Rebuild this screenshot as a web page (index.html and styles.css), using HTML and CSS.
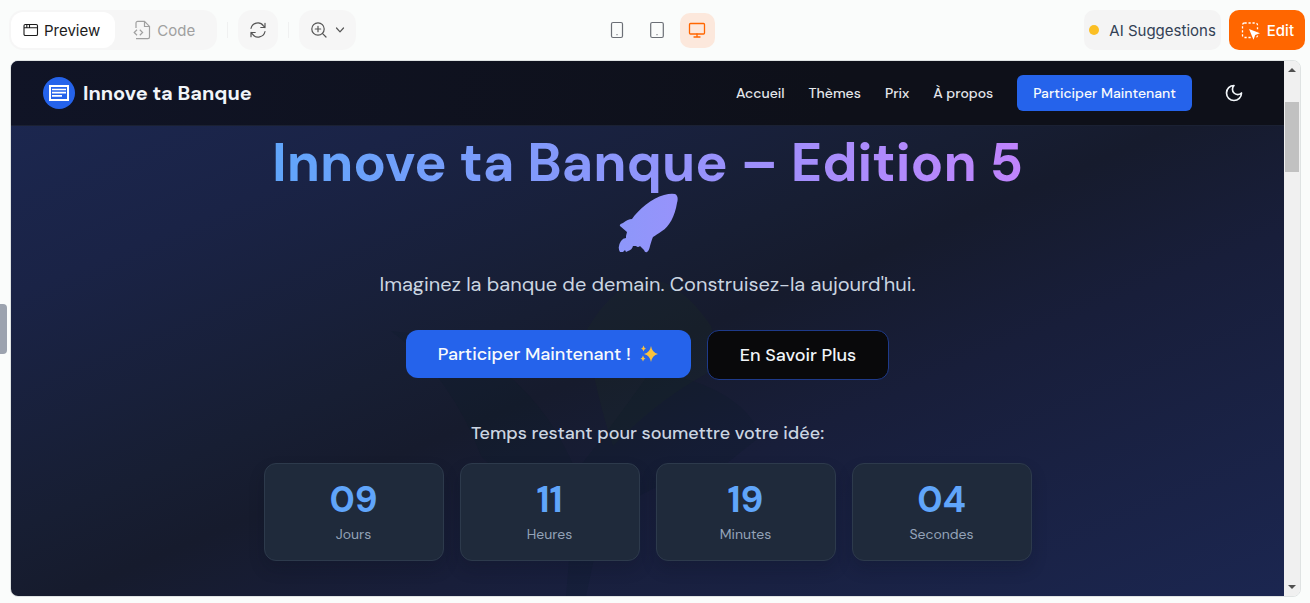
FILE: index.html
```html
<!DOCTYPE html>
<html lang="fr">
<head>
<meta charset="utf-8">
<meta name="viewport" content="width=device-width, initial-scale=1">
<title>Innove ta Banque</title>
<link rel="stylesheet" href="styles.css">
</head>
<body>
<div class="toolbar">
  <div class="tools">
    <div class="tabs">
      <button class="tab tab-active" type="button">
        <svg width="16" height="16" viewBox="0 0 16 16" fill="none" stroke="currentColor" stroke-width="1.1"><rect x="1" y="2.5" width="13.5" height="11" rx="1.3"/><path d="M1 5.8h13.5M3.8 2.5v3.3M6.5 2.5v3.3"/></svg>
        Preview
      </button>
      <button class="tab" type="button">
        <svg width="18" height="20" viewBox="0 0 18 20" fill="none" stroke="currentColor" stroke-width="1.2"><path d="M3 8V3a1.6 1.6 0 0 1 1.600-1.600H11.500L16.500 6.400V17a1.600 1.600 0 0 1-1.600 1.600H3M11.500 1.500v5h5M4 9.800 1.200 12.500 4 15.200M6.800 9.800 9.600 12.500 6.800 15.200"/></svg>
        Code
      </button>
    </div>
    <span class="divider"></span>
    <button class="tool" type="button" aria-label="Refresh">
      <svg width="18" height="18" viewBox="0 0 18 18" fill="none" stroke="currentColor" stroke-width="1.2" stroke-linecap="round" stroke-linejoin="round"><path d="M2 7.500A7 7 0 0 1 14.500 4.800L16 6.500M16 2.300V6.500H11.800M16 10.500A7 7 0 0 1 3.500 13.200L2 11.500M2 15.700V11.500H6.200"/></svg>
    </button>
    <span class="divider"></span>
    <button class="tool tool-zoom" type="button" aria-label="Zoom">
      <svg width="18" height="18" viewBox="0 0 18 18" fill="none" stroke="currentColor" stroke-width="1.2" stroke-linecap="round"><circle cx="8" cy="8" r="6.200"/><path d="M12.600 12.600 16 16M5.300 8h5.400M8 5.300v5.400"/></svg>
      <svg width="12" height="12" viewBox="0 0 12 12" fill="none" stroke="currentColor" stroke-width="1.2" stroke-linecap="round" stroke-linejoin="round"><path d="M2.500 4 6 7.800 9.500 4"/></svg>
    </button>
  </div>
  <div class="devices">
    <button class="device" type="button" aria-label="Mobile">
      <svg width="18" height="18" viewBox="0 0 18 18" fill="none" stroke="currentColor" stroke-width="1.2"><rect x="3.500" y="1.500" width="11" height="15" rx="1.500"/><path d="M8.500 13.700h1"/></svg>
    </button>
    <button class="device" type="button" aria-label="Tablet">
      <svg width="18" height="18" viewBox="0 0 18 18" fill="none" stroke="currentColor" stroke-width="1.2"><rect x="2.700" y="1.500" width="12.600" height="15" rx="1.500"/><path d="M8.500 13.700h1"/></svg>
    </button>
    <button class="device device-active" type="button" aria-label="Desktop">
      <svg width="18" height="18" viewBox="0 0 18 18" fill="none" stroke="currentColor" stroke-width="1.300" stroke-linecap="round"><rect x="1.500" y="2.500" width="15" height="10.500" rx="1"/><path d="M9 13v3M6 16h6"/></svg>
    </button>
  </div>
  <div class="actions">
    <button class="suggest" type="button"><span class="dot"></span>AI Suggestions</button>
    <button class="edit" type="button">
      <svg width="20" height="20" viewBox="0 0 20 20" fill="none"><rect x="2.500" y="3" width="15" height="14.500" rx="2" stroke="#fff" stroke-width="1.300" stroke-dasharray="2.200 1.800"/><path d="M9 9 20 13.200 15.200 15 13.500 19.800Z" fill="#fff" stroke="#ff6600" stroke-width="2.400" paint-order="stroke" stroke-linejoin="round"/></svg>
      Edit
    </button>
  </div>
</div>

<div class="workspace">
  <span class="handle"></span>
  <div class="frame">
    <div class="site">
      <header class="header">
        <div class="brand">
          <svg width="32" height="32" viewBox="0 0 32 32" fill="none" stroke="#fff"><circle cx="16" cy="16" r="16" fill="#2563eb" stroke="none"/><rect x="7" y="9" width="18" height="14" stroke-width="2"/><path d="M9 12.500h14M9 15.700h14M9 18.900h10" stroke-width="1.700"/></svg>
          Innove ta Banque
        </div>
        <nav class="nav">
          <a href="#accueil">Accueil</a>
          <a href="#themes">Thèmes</a>
          <a href="#prix">Prix</a>
          <a href="#apropos">À propos</a>
          <button class="nav-cta" type="button">Participer Maintenant</button>
          <button class="theme" type="button" aria-label="Thème sombre">
            <svg width="20" height="20" viewBox="0 0 24 24" fill="none" stroke="currentColor" stroke-width="2" stroke-linecap="round" stroke-linejoin="round"><path d="M12 3a6 6 0 0 0 9 9 9 9 0 1 1-9-9Z"/></svg>
          </button>
        </nav>
      </header>
      <main class="hero">
        <svg class="backdrop" viewBox="0 0 1273 470" preserveAspectRatio="xMidYMid slice" aria-hidden="true">
          <path d="M575 205Q635 105 700 200L710 240Q650 270 602 320Q585 270 575 205Z" fill="#263b1c" opacity=".14"/>
          <path d="M380 205Q510 215 565 345Q590 315 640 245Q730 260 750 310L700 350Q640 350 590 400L575 470H555L560 410Q500 360 470 330Q440 250 380 205Z" fill="#071a22" opacity=".14"/>
        </svg>
        <h1 class="title"><span>Innove ta Banque – Edition 5</span>
          <svg width="60" height="60" viewBox="0 0 60 60" role="img" aria-label="Fusée"><defs><linearGradient id="rocket"><stop stop-color="#8d97fa"/><stop offset="1" stop-color="#9793fb"/></linearGradient></defs><path fill="url(#rocket)" d="M57 1Q61 3 59 10C57 23 51 34 44 38Q38 42 35 44Q34 46 32 53Q31 58 29 59Q27 60 26 57L22 53Q20 55 18 53L15 53Q14 57 10 58L8 59L7 57L5 59L2 59Q-1 54 3 48Q5 45 8 45L8 43L9 39L2 33Q1 31 5 30Q10 26 14 26C20 17 34 5 46 2Q53 0 57 1Z"/></svg>
        </h1>
        <p class="lead">Imaginez la banque de demain. Construisez-la aujourd'hui.</p>
        <div class="buttons">
          <button class="primary" type="button">Participer Maintenant !
            <svg width="20" height="20" viewBox="0 0 20 20" fill="#fbc23c" aria-hidden="true"><path d="M12 2Q13 8.500 19 10Q13 11.500 12 18Q11 11.500 5 10Q11 8.500 12 2ZM4.500 1.500Q5 4 7 4.500Q5 5 4.500 7.500Q4 5 2 4.500Q4 4 4.500 1.500ZM4 11.500Q4.500 14 6.500 14.500Q4.500 15 4 17.500Q3.500 15 1.500 14.500Q3.500 14 4 11.500Z"/></svg>
          </button>
          <button class="secondary" type="button">En Savoir Plus</button>
        </div>
        <p class="remaining">Temps restant pour soumettre votre idée:</p>
        <div class="countdown">
          <div class="unit"><strong>09</strong><span>Jours</span></div>
          <div class="unit"><strong>11</strong><span>Heures</span></div>
          <div class="unit"><strong>19</strong><span>Minutes</span></div>
          <div class="unit"><strong>04</strong><span>Secondes</span></div>
        </div>
      </main>
    </div>
    <div class="scrollbar" aria-hidden="true">
      <svg width="16" height="16" viewBox="0 0 16 16"><path d="M4 11h8L8 7Z" fill="#505050"/></svg>
      <span class="thumb"></span>
      <svg class="arrow-down" width="16" height="16" viewBox="0 0 16 16"><path d="M4 5h8L8 9Z" fill="#505050"/></svg>
    </div>
  </div>
</div>
</body>
</html>
```

FILE: styles.css
```css
* { box-sizing: border-box; }
body {
  margin: 0;
  min-height: 100vh;
  display: flex;
  flex-direction: column;
  background: #fafcfb;
  font-family: Inter, sans-serif;
}
button {
  border: 0;
  margin: 0;
  padding: 0;
  background: none;
  font: inherit;
  color: inherit;
  display: flex;
  align-items: center;
  justify-content: center;
  white-space: nowrap;
}
svg { display: block; flex: none; }
h1, p { margin: 0; }

.toolbar {
  display: grid;
  grid-template-columns: 1fr auto 1fr;
  align-items: center;
  height: 60px;
  padding: 0 5px 0 9px;
  font-size: 15px;
}
.tools, .actions, .devices { display: flex; align-items: center; }
.tabs {
  display: flex;
  height: 40px;
  padding: 2px;
  border-radius: 14px;
  background: #f6f6f6;
}
.tab { gap: 6px; padding: 0 20px 0 18px; color: #a0a0a0; }
.tab-active {
  gap: 5px;
  padding: 0 15px 0 12px;
  border-radius: 12px;
  background: #fff;
  color: #1c1c1c;
}
.divider { width: 1px; height: 16px; margin: 0 10px; background: #f0f1f1; }
.tool {
  width: 40px;
  height: 40px;
  border-radius: 14px;
  background: #f6f6f6;
  color: #555;
}
.tool-zoom { width: 57px; gap: 6px; }
.devices { gap: 5px; color: #6b6f76; }
.device { width: 35px; height: 35px; border-radius: 10px; }
.device-active { background: #fce8dc; color: #ff6600; }
.actions { justify-content: flex-end; gap: 8px; }
.suggest {
  height: 40px;
  gap: 10px;
  padding: 0 5px;
  border-radius: 10px;
  background: #f4f4f4;
  color: #334155;
}
.dot { width: 10px; height: 10px; border-radius: 50%; background: #fbbf24; }
.edit {
  height: 40px;
  gap: 7px;
  padding: 0 11px;
  border-radius: 10px;
  background: #ff6600;
  color: #fff;
  font-weight: 500;
}

.workspace { flex: 1; display: flex; align-items: center; padding-bottom: 6px; }
.handle {
  width: 7px;
  height: 50px;
  margin-right: 3px;
  border-radius: 0 4px 4px 0;
  background: #9ca3af;
}
.frame {
  flex: 1;
  align-self: stretch;
  display: flex;
  margin-right: 9px;
  border: 1px solid #dfe3e3;
  border-radius: 8px;
  overflow: hidden;
}
.site {
  flex: 1;
  display: flex;
  flex-direction: column;
  background: linear-gradient(to bottom right, #1c2852 0%, #1a2346 22%, #171e33 44%, #161b2d 52%, #181e3a 66%, #1b2650 100%);
  color: #f1f5f9;
  font-family: "DM Sans", Inter, sans-serif;
}
.header {
  display: flex;
  align-items: center;
  justify-content: space-between;
  height: 65px;
  padding: 0 32px;
  border-bottom: 1px solid #1b2133;
  background: linear-gradient(100deg, #101426, #0e1019 65%);
}
.brand { display: flex; align-items: center; gap: 8px; font-size: 20px; font-weight: 700; }
.nav { display: flex; align-items: center; gap: 24px; font-size: 14px; font-weight: 500; }
.nav a { color: #e5e7eb; text-decoration: none; }
.nav-cta {
  height: 36px;
  padding: 0 16px;
  border-radius: 6px;
  background: #2563eb;
  color: #f8fafc;
}
.theme { width: 36px; height: 36px; }

.hero {
  position: relative;
  isolation: isolate;
  flex: 1;
  display: flex;
  flex-direction: column;
  align-items: center;
  padding: 7px 32px 32px;
}
.backdrop { position: absolute; inset: 0; width: 100%; height: 100%; z-index: -1; }
.title {
  display: flex;
  flex-direction: column;
  align-items: center;
  font-size: 54px;
  line-height: 60px;
  font-weight: 700;
}
.title span {
  background: linear-gradient(90deg, #60a5fa, #c084fc);
  -webkit-background-clip: text;
  background-clip: text;
  color: transparent;
}
.lead { margin-top: 15px; font-size: 20px; line-height: 32px; color: #cbd5e1; }
.buttons {
  display: flex;
  align-items: flex-start;
  gap: 16px;
  margin-top: 30px;
  font-size: 18px;
  font-weight: 500;
}
.primary { height: 48px; gap: 8px; padding: 0 32px; border-radius: 12px; background: #2563eb; color: #f8fafc; }
.secondary { height: 50px; padding: 0 32px; border: 1px solid #1e3a8a; border-radius: 12px; background: #09090b; }
.remaining { margin-top: 39px; font-size: 18px; line-height: 28px; font-weight: 500; color: #cbd5e1; }
.countdown {
  display: grid;
  grid-template-columns: repeat(4, 1fr);
  gap: 16px;
  width: 100%;
  max-width: 768px;
  margin-top: 16px;
}
.unit {
  display: flex;
  flex-direction: column;
  align-items: center;
  padding: 16px;
  border: 1px solid #2d3a4c;
  border-radius: 12px;
  background: #1f2a3b;
  box-shadow: 0 8px 16px rgba(10, 14, 28, .2);
}
.unit strong { font-size: 36px; line-height: 40px; color: #60a5fa; }
.unit span { margin-top: 4px; font-size: 14px; line-height: 20px; color: #94a3b8; }

.scrollbar {
  display: flex;
  flex-direction: column;
  width: 16px;
  background: #f0f0f0;
}
.thumb { width: 14px; height: 70px; margin: 25px auto 0; background: #c1c1c1; }
.arrow-down { margin-top: auto; }
```
